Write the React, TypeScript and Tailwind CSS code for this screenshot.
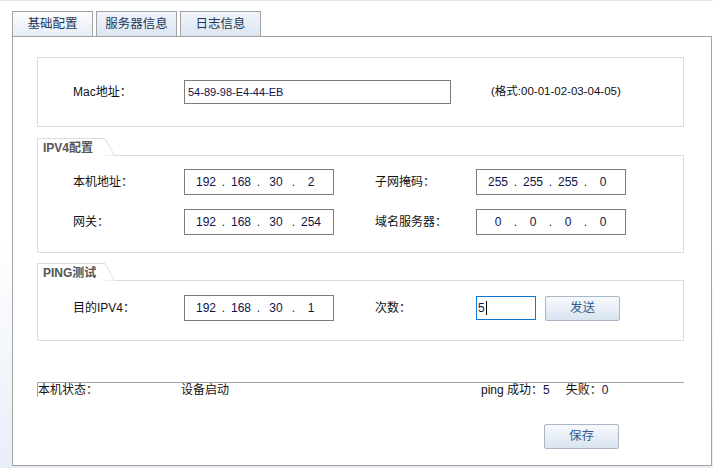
import type { ReactNode } from 'react';

const font = { fontFamily: '"Liberation Sans", "Noto Sans CJK SC", sans-serif' };

function Tab({ label, active }: { label: string; active?: boolean }) {
  return (
    <div
      className={
        'flex h-[25px] w-[81px] items-center justify-center border border-b-0 border-[#a3a3a3] text-[12.5px] text-[#23395a] ' +
        (active
          ? 'bg-gradient-to-b from-[#fdfdfe] to-[#e6edf6]'
          : 'bg-gradient-to-b from-[#f1f5fa] to-[#dbe5f1]')
      }
    >
      {label}
    </div>
  );
}

function IpInput({ parts }: { parts: string[] }) {
  return (
    <div className="flex h-[26px] w-[150px] items-start border border-[#7c7c7c] bg-white pl-[7px] pt-[3px] text-[12px] text-[#10124a]">
      {parts.map((p, i) => (
        <div key={i} className="flex">
          {i > 0 ? <span className="w-[7px] text-center">.</span> : null}
          <span className="w-[28px] text-center">{p}</span>
        </div>
      ))}
    </div>
  );
}

function SectionTab({ label }: { label: string }) {
  return (
    <div className="relative z-10 -mb-px flex h-[18px]">
      <div className="flex w-[67px] items-center border-l border-t border-[#dcdcdc] bg-white pl-[5px] text-[12px] font-bold text-[#555]">
        {label}
      </div>
      <svg width="11" height="18" viewBox="0 0 11 18" className="block">
        <path d="M0 0.5 H1 L10.5 17.5 H0 Z" fill="#fff" />
        <path d="M0 0.5 H1 L10.5 17.5 H11" fill="none" stroke="#dcdcdc" strokeWidth="1" />
      </svg>
    </div>
  );
}

function Label({ children, w }: { children: ReactNode; w: string }) {
  return <div className={'text-[12px] text-[#111] ' + w}>{children}</div>;
}

function Btn({ children }: { children: ReactNode }) {
  return (
    <div className="flex h-[25px] w-[75px] items-center justify-center rounded-[2px] border border-[#aab6c6] bg-gradient-to-b from-[#f7f9fc] to-[#d9e4f1] text-[12.5px] text-[#2f5d93]">
      {children}
    </div>
  );
}

export default function App() {
  return (
    <div
      className="h-[468px] w-[713px] overflow-hidden border-t border-[#e6e6e6] bg-gradient-to-b from-white via-white to-[#e8eef8] pl-[12px] pt-[10px]"
      style={font}
    >
      <div className="flex gap-[3px]">
        <Tab label="基础配置" active />
        <Tab label="服务器信息" />
        <Tab label="日志信息" />
      </div>

      <div className="h-[430px] w-[700px] border border-[#a3a3a3] bg-white pl-[24px] pr-[27px] pt-[20px]">
        {/* MAC */}
        <div className="flex h-[70px] items-center border border-[#dcdcdc] pl-[35px]">
          <Label w="w-[111px]">Mac地址：</Label>
          <div className="flex h-[24px] w-[267px] items-center border border-[#7c7c7c] px-[3px] text-[11px] text-[#10124a]">
            54-89-98-E4-44-EB
          </div>
          <div className="ml-[40px] text-[11.5px] text-[#111]">(格式:00-01-02-03-04-05)</div>
        </div>

        {/* IPV4 */}
        <div className="mt-[11px]">
          <SectionTab label="IPV4配置" />
          <div className="flex h-[98px] flex-col gap-[14px] border border-[#dcdcdc] pl-[35px] pt-[13px]">
            <div className="flex items-center">
              <Label w="w-[111px]">本机地址：</Label>
              <IpInput parts={['192', '168', '30', '2']} />
              <div className="w-[41px]" />
              <Label w="w-[101px]">子网掩码：</Label>
              <IpInput parts={['255', '255', '255', '0']} />
            </div>
            <div className="flex items-center">
              <Label w="w-[111px]">网关：</Label>
              <IpInput parts={['192', '168', '30', '254']} />
              <div className="w-[41px]" />
              <Label w="w-[101px]">域名服务器：</Label>
              <IpInput parts={['0', '0', '0', '0']} />
            </div>
          </div>
        </div>

        {/* PING */}
        <div className="mt-[10px]">
          <SectionTab label="PING测试" />
          <div className="flex h-[61px] items-start border border-[#dcdcdc] pl-[35px] pt-[14px]">
            <div className="flex items-center">
              <Label w="w-[111px]">目的IPV4：</Label>
              <IpInput parts={['192', '168', '30', '1']} />
              <div className="w-[41px]" />
              <Label w="w-[101px]">次数：</Label>
              <div className="flex h-[24px] w-[60px] items-center border border-[#0a78d4] pl-[1px] text-[12px] text-[#10124a]">
                5<span className="ml-px inline-block h-[14px] w-px bg-black" />
              </div>
              <div className="ml-[9px]">
                <Btn>发送</Btn>
              </div>
            </div>
          </div>
        </div>

        {/* status */}
        <div className="mt-[41px] flex border-t border-[#a3a3a3] text-[12px] leading-[14px] text-[#111]">
          <div className="w-[144px] border-l border-[#a3a3a3]">本机状态：</div>
          <div className="w-[300px]">设备启动</div>
          <div className="flex">
            <span>ping 成功：</span>
            <span className="text-[#10124a]">5</span>
            <span className="ml-[16px]">失败：</span>
            <span className="text-[#10124a]">0</span>
          </div>
        </div>

        <div className="mt-[27px] flex pl-[507px]">
          <Btn>保存</Btn>
        </div>
      </div>
    </div>
  );
}
